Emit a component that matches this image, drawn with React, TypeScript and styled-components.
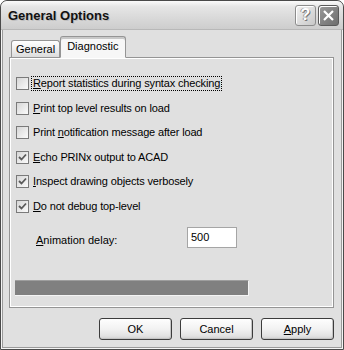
import React from "react";
import styled, { createGlobalStyle } from "styled-components";

const Global = createGlobalStyle`
  html, body { margin: 0; padding: 0; background: #ffffff; }
  body { font-family: "Liberation Sans", Arial, sans-serif; font-size: 11px; color: #000; }
`;

const Window = styled.div`
  box-sizing: border-box;
  width: 344px;
  height: 350px;
  border: 1px solid #4a4a4a;
  border-radius: 7px 7px 0 0;
  background: #e0e0e0;
  display: flex;
  flex-direction: column;
  overflow: hidden;
  box-shadow: inset 0 0 0 1px #f4f4f4, inset 0 0 0 2px #9a9a9a;
`;

const TitleBar = styled.div`
  height: 28px;
  flex: none;
  display: flex;
  align-items: center;
  padding: 0 4px 0 7px;
  background: linear-gradient(#fbfbfb 0%, #e6e6e6 20%, #d9d9d9 60%, #cdcdcd 100%);
  border-bottom: 1px solid #b8b8b8;
  border-radius: 6px 6px 0 0;
`;

const Title = styled.div`
  flex: 1;
  font-weight: bold;
  font-size: 13px;
  color: #111;
  text-shadow: 1px 1px 0 #bdbdbd;
  padding-top: 1px;
`;

const CapButton = styled.div<{ $dark?: boolean }>`
  box-sizing: border-box;
  width: 21px;
  height: 21px;
  margin-left: 2px;
  border: 1px solid ${(p) => (p.$dark ? "#5a5a5a" : "#8c8c8c")};
  border-radius: 3px;
  background: ${(p) =>
    p.$dark
      ? "linear-gradient(135deg, #9a9a9a, #6e6e6e)"
      : "linear-gradient(135deg, #f2f2f2, #c8c8c8)"};
  display: flex;
  align-items: center;
  justify-content: center;
  box-shadow: inset 1px 1px 0 #ffffff;
`;

const QMark = styled.span`
  font-weight: bold;
  font-size: 16px;
  color: #fff;
  text-shadow: 1px 1px 0 #777, -1px 0 0 #999;
`;

const Body = styled.div`
  flex: 1;
  display: flex;
  flex-direction: column;
  padding: 6px 9px 0 8px;
`;

const TabRow = styled.div`
  display: flex;
  align-items: flex-end;
  height: 21px;
  padding-left: 2px;
  position: relative;
  z-index: 1;
`;

const Tab = styled.div<{ $active?: boolean }>`
  box-sizing: border-box;
  height: ${(p) => (p.$active ? "22px" : "17px")};
  padding: ${(p) => (p.$active ? "3px 6px 0 6px" : "2px 4px 0 4px")};
  border: 1px solid #959595;
  border-bottom: ${(p) => (p.$active ? "1px solid #f7f7f7" : "none")};
  border-radius: 3px 3px 0 0;
  background: ${(p) =>
    p.$active ? "#f7f7f7" : "linear-gradient(#ffffff, #ececec 60%, #dcdcdc)"};
  box-shadow: ${(p) => (p.$active ? "inset 0 2px 0 #c8c8c8" : "none")};
  font-size: 11px;
  margin-bottom: ${(p) => (p.$active ? "-1px" : "0")};
  white-space: nowrap;
`;

const Panel = styled.div`
  box-sizing: border-box;
  height: 251px;
  border: 1px solid #959595;
  background: #e0e0e0;
  box-shadow: inset 1px 1px 0 #ffffff, inset -1px -1px 0 #ffffff;
  display: flex;
  flex-direction: column;
  padding: 19px 0 0 6px;
`;

const CheckRow = styled.label`
  display: flex;
  align-items: center;
  height: 13px;
  margin-bottom: 11.5px;
  gap: 3px;
  font-size: 11px;
  letter-spacing: -0.15px;
`;

const Box = styled.span`
  box-sizing: border-box;
  width: 13px;
  height: 13px;
  flex: none;
  border: 1px solid #7a7a7a;
  background: linear-gradient(135deg, #d6d6d6 0%, #ececec 60%, #fafafa 100%);
  display: flex;
  align-items: center;
  justify-content: center;
`;

const Label = styled.span<{ $focus?: boolean }>`
  padding: 0 1px;
  outline: ${(p) => (p.$focus ? "1px dotted #000" : "none")};
  line-height: 13px;
`;

const DelayRow = styled.div`
  display: flex;
  align-items: center;
  padding-left: 20px;
  margin-top: 3px;
  height: 21px;
  font-size: 11px;
`;

const DelayLabel = styled.span`
  width: 151px;
  padding-top: 4px;
`;

const Input = styled.div`
  box-sizing: border-box;
  width: 50px;
  height: 21px;
  border: 1px solid #a5a5a5;
  background: #fff;
  padding: 3px 0 0 3px;
  font-size: 11px;
`;

const Progress = styled.div`
  box-sizing: border-box;
  width: 234px;
  height: 16px;
  margin: 32px 0 0 -1px;
  background: #808080;
  border-top: 1px solid #9e9e9e;
  border-right: 1px solid #f4f4f4;
  border-bottom: 1px solid #f4f4f4;
`;

const ButtonRow = styled.div`
  display: flex;
  justify-content: flex-end;
  gap: 8px;
  margin-top: 10px;
`;

const Button = styled.div`
  box-sizing: border-box;
  width: 73px;
  height: 22px;
  border: 1px solid #3c3c3c;
  border-radius: 3px;
  background: linear-gradient(#fefefe 0%, #f2f2f2 50%, #e2e2e2 85%, #cfcfcf 100%);
  box-shadow: inset -1px -1px 0 #c4c4c4;
  display: flex;
  align-items: center;
  justify-content: center;
  font-size: 11px;
`;

const U = styled.span`
  text-decoration: underline;
`;

const Check = () => (
  <svg width="9" height="9" viewBox="0 0 9 9">
    <path d="M1 4 L3.5 6.5 L8 1.5" fill="none" stroke="#5a5a5a" strokeWidth="1.8" />
  </svg>
);

const items: { pre: string; u: string; post: string; checked: boolean; focus?: boolean }[] = [
  { pre: "", u: "R", post: "eport statistics during syntax checking", checked: false, focus: true },
  { pre: "", u: "P", post: "rint top level results on load", checked: false },
  { pre: "Print ", u: "n", post: "otification message after load", checked: false },
  { pre: "", u: "E", post: "cho PRINx output to ACAD", checked: true },
  { pre: "", u: "I", post: "nspect drawing objects verbosely", checked: true },
  { pre: "", u: "D", post: "o not debug top-level", checked: true },
];

export default function App() {
  return (
    <>
      <Global />
      <Window>
        <TitleBar>
          <Title>General Options</Title>
          <CapButton>
            <QMark>?</QMark>
          </CapButton>
          <CapButton $dark>
            <svg width="13" height="13" viewBox="0 0 13 13">
              <path d="M2 2 L11 11 M11 2 L2 11" stroke="#fff" strokeWidth="2.2" />
            </svg>
          </CapButton>
        </TitleBar>
        <Body>
          <TabRow>
            <Tab>General</Tab>
            <Tab $active>Diagnostic</Tab>
          </TabRow>
          <Panel>
            {items.map((it, i) => (
              <CheckRow key={i}>
                <Box>{it.checked && <Check />}</Box>
                <Label $focus={it.focus}>
                  {it.pre}
                  <U>{it.u}</U>
                  {it.post}
                </Label>
              </CheckRow>
            ))}
            <DelayRow>
              <DelayLabel>
                <U>A</U>nimation delay:
              </DelayLabel>
              <Input>500</Input>
            </DelayRow>
            <Progress />
          </Panel>
          <ButtonRow>
            <Button>OK</Button>
            <Button>Cancel</Button>
            <Button>
              <span>
                <U>A</U>pply
              </span>
            </Button>
          </ButtonRow>
        </Body>
      </Window>
    </>
  );
}
